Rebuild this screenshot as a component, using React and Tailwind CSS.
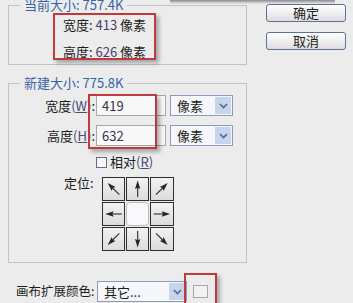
import React from "react";

const arrows = [
  { deg: -45 },
  { deg: 0 },
  { deg: 45 },
  { deg: -90 },
  null,
  { deg: 90 },
  { deg: -135 },
  { deg: 180 },
  { deg: 135 },
];

function Arrow({ deg }) {
  return (
    <svg width="22" height="22" viewBox="0 0 24 24">
      <g transform={`rotate(${deg} 12 12)`}>
        <line x1="12" y1="21" x2="12" y2="10" stroke="#333" strokeWidth="1.3" />
        <polygon points="12,2.5 9,12 12,10.5 15,12" fill="#262626" />
      </g>
    </svg>
  );
}

function Select({ value, width }) {
  return (
    <div
      className={`flex h-[21px] items-stretch border border-[#8c9cb8] bg-[#f5f7fb] ${width}`}
    >
      <span className="flex-1 pl-[6px] leading-[19px]">{value}</span>
      <span className="m-[1px] flex w-[16px] items-center justify-center bg-[#c6d4ec]">
        <svg width="9" height="6" viewBox="0 0 9 6">
          <path d="M1 1 L4.5 4.5 L8 1" fill="none" stroke="#56688c" strokeWidth="1.6" />
        </svg>
      </span>
    </div>
  );
}

function Mnemonic({ ch }) {
  return (
    <span className="text-[#4a4a7a]">
      (<span className="underline">{ch}</span>)
    </span>
  );
}

export default function App() {
  return (
    <div className="relative h-[303px] w-[353px] overflow-hidden bg-[#ececec] font-['Noto_Sans_CJK_SC',sans-serif] text-[13px] text-[#1c1c1c]">
      {/* shadow from cropped window above */}
      <div className="absolute left-[170px] top-0 h-[4px] w-[165px] bg-gradient-to-b from-[#8a8a8a] to-transparent" />

      <div className="flex">
        <div className="ml-[8px] flex w-[239px] flex-col">
          <fieldset className="-mt-[2px] h-[67px] border border-[#c2c2c2]">
            <legend className="ml-[11px] px-[4px] leading-[14px] text-[#3563a8]">当前大小: 757.4K</legend>
            <div className="mt-[5px] flex flex-col gap-[11px] pl-[54px]">
              <div className="h-[16px] leading-[16px]">
                宽度:&nbsp;<span className="text-[#4b3d6e]">413</span> 像素
              </div>
              <div className="h-[16px] leading-[16px]">
                高度:&nbsp;<span className="text-[#4b3d6e]">626</span> 像素
              </div>
            </div>
          </fieldset>

          <fieldset className="mt-[11px] h-[187px] border border-[#c2c2c2]">
            <legend className="ml-[11px] px-[4px] leading-[14px] text-[#3563a8]">新建大小: 775.8K</legend>
            <div className="mt-[5px] flex flex-col">
              <div className="flex items-center">
                <span className="w-[86px] text-right">
                  宽度<Mnemonic ch="W" />:
                </span>
                <div className="ml-[1px] h-[21px] w-[70px] border border-[#a6a6a6] bg-[#f8f8f8] pl-[5px] leading-[19px] text-[#3d3152]">
                  419
                </div>
                <div className="ml-[4px]">
                  <Select value="像素" width="w-[63px]" />
                </div>
              </div>
              <div className="mt-[9px] flex items-center">
                <span className="w-[86px] text-right">
                  高度<Mnemonic ch="H" />:
                </span>
                <div className="ml-[1px] h-[21px] w-[70px] border border-[#a6a6a6] bg-[#f8f8f8] pl-[5px] leading-[19px] text-[#3d3152]">
                  632
                </div>
                <div className="ml-[4px]">
                  <Select value="像素" width="w-[63px]" />
                </div>
              </div>
              <div className="mt-[9px] flex h-[14px] items-center pl-[87px]">
                <span className="h-[11px] w-[11px] border border-[#5c6f8f] bg-[#f7f7f7]" />
                <span className="ml-[3px] leading-[14px]">
                  相对<Mnemonic ch="R" />
                </span>
              </div>
              <div className="mt-[8px] flex pl-[55px]">
                <span className="mt-[-1px] leading-[14px]">定位:</span>
                <div className="ml-[8px] grid w-[72px] grid-cols-3 gap-[1px] bg-[#ececec]">
                  {arrows.map((a, i) =>
                    a ? (
                      <div
                        key={i}
                        className="flex h-[24px] items-center justify-center border border-[#2f2f2f] bg-gradient-to-b from-[#f2f2f2] to-[#dcdcdc]"
                      >
                        <Arrow deg={a.deg} />
                      </div>
                    ) : (
                      <div key={i} className="h-[24px] rounded-[4px] border border-[#b8bcc4] bg-[#f9f9fb]" />
                    )
                  )}
                </div>
              </div>
            </div>
          </fieldset>

          <div className="mt-[18px] flex items-center">
            <span className="ml-[8px] w-[81px] whitespace-nowrap text-[12.5px]">画布扩展颜色:</span>
            <Select value="其它..." width="w-[90px]" />
            <span className="ml-[6px] h-[13px] w-[15px] border border-[#a8a8a8] bg-[#f2f2f2]" />
          </div>
        </div>

        <div className="ml-[19px] mt-[4px] flex w-[80px] flex-col gap-[10px]">
          <button className="h-[18px] rounded-[3px] border border-[#5a719b] bg-gradient-to-b from-[#ffffff] to-[#dedede] leading-[16px]">
            确定
          </button>
          <button className="h-[18px] rounded-[3px] border border-[#5a719b] bg-gradient-to-b from-[#ffffff] to-[#dedede] leading-[16px]">
            取消
          </button>
        </div>
      </div>

      {/* red annotation boxes */}
      <div className="absolute left-[53px] top-[13px] h-[47px] w-[103px] border-2 border-[#bf3a3e] shadow-[3px_3px_4px_rgba(0,0,0,0.3)]" />
      <div className="absolute left-[88px] top-[94px] h-[55px] w-[69px] border-2 border-[#bf3a3e] shadow-[3px_3px_4px_rgba(0,0,0,0.3)]" />
      <div className="absolute left-[184px] top-[273px] h-[40px] w-[33px] border-2 border-[#bf3a3e] shadow-[3px_3px_4px_rgba(0,0,0,0.3)]" />
    </div>
  );
}
